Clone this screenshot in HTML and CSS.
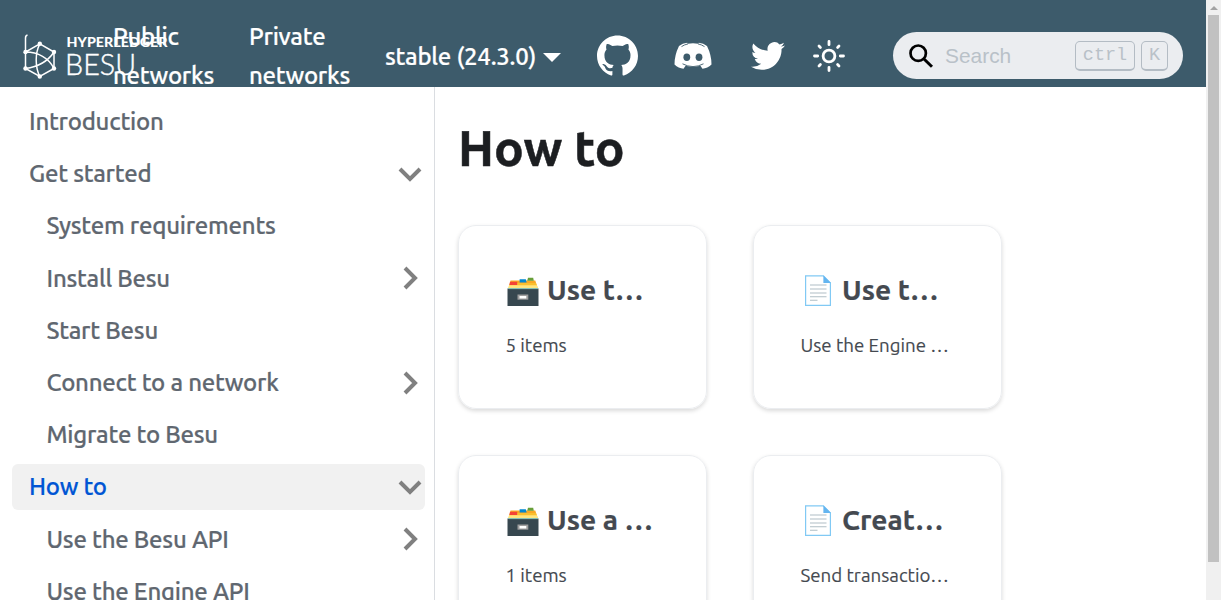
FILE: index.html
```html
<!DOCTYPE html>
<html lang="en">
<head>
<meta charset="utf-8">
<title>How to | Besu documentation</title>
<link rel="stylesheet" href="styles.css">
</head>
<body>
<svg class="defs" aria-hidden="true">
  <symbol id="box" viewBox="0 0 32 32">
    <path fill="#f9a825" d="M3.5 5.600h24.800l2.200 7H2z"/>
    <path fill="#689f38" d="M21 2.700h5.200l.6 3h-6.600z"/>
    <path fill="#0288d1" d="M12.600 4.200h6.200l.8 3.300h-7z"/>
    <path fill="#fbc02d" d="M3 8h26l1.500 5H1.800z"/>
    <path fill="#f44336" d="M3 6.800h7.200v3.300H2.400z"/>
    <path fill="#ffe57f" d="M2 10.200h28l1.200 3.300H.8z"/>
    <path fill="#37474f" d="M.5 13.500h31V31H.5z"/>
    <path fill="#80cbc4" d="M1 13.200h30v.9H1z"/>
    <path fill="#9e9e9e" d="M10.500 19.500h10.800v5.200H10.500z"/>
    <path fill="#fff" d="M12.500 21h6.800v2.500h-6.800z"/>
  </symbol>
  <symbol id="page" viewBox="0 0 32 32">
    <path fill="#fff" stroke="#81c9f4" stroke-width="1.200" d="M3.600.9h17.800L28.400 8v22.400H3.600z"/>
    <path fill="#64b5f0" d="M21.400.4 29 8h-7.600z"/>
    <path stroke="#b0bec5" stroke-width="1.100" d="M8 10h16.500M8 14h16.500M8 18h16.500M8 21.800h16.500M8 25.300h7.500"/>
  </symbol>
  <symbol id="chev" viewBox="0 0 24 24">
    <path fill="none" stroke="#808080" stroke-width="4" d="M7 2l10 10L7 22"/>
  </symbol>
</svg>
<div class="window">
  <div class="app">
    <header class="navbar">
      <a class="logo">
        <svg width="150" height="50" viewBox="0 0 150 50">
          <g fill="none" stroke="#fff" stroke-width="1.500">
            <path d="M4.500 4Q2.500 4.500 2.500 7v30.500L16.800 45.500 31 37.500V21L16.800 12.800 2.500 21C15 21 26 27 31 37.500M31 21C24 31.500 14 36 2.500 37.500M16.800 12.800C12 22 12 36 16.800 45.500"/>
          </g>
          <g fill="#fff"><circle cx="16.800" cy="12.800" r="2.200"/><circle cx="2.500" cy="21" r="2.200"/><circle cx="31" cy="21" r="2.200"/><circle cx="2.500" cy="37.500" r="2.200"/><circle cx="31" cy="37.500" r="2.200"/><circle cx="16.800" cy="45.500" r="2.200"/></g>
          <text class="brand-top" x="43.500" y="16" textLength="101" lengthAdjust="spacingAndGlyphs">HYPERLEDGER</text>
          <text class="brand-main" x="42" y="43.500" textLength="71" lengthAdjust="spacingAndGlyphs">BESU</text>
        </svg>
      </a>
      <a class="nav-link">Public<br>networks</a>
      <a class="nav-link">Private<br>networks</a>
      <a class="version"><span>stable (24.3.0)</span><i class="caret"></i></a>
      <svg class="github" viewBox="0 0 24 24" fill="#fff"><path d="M12 .297c-6.630 0-12 5.373-12 12 0 5.303 3.438 9.800 8.205 11.385.6.113.82-.258.82-.577 0-.285-.010-1.040-.015-2.040-3.338.724-4.042-1.610-4.042-1.610C4.422 18.070 3.633 17.700 3.633 17.700c-1.087-.744.084-.729.084-.729 1.205.084 1.838 1.236 1.838 1.236 1.070 1.835 2.809 1.305 3.495.998.108-.776.417-1.305.76-1.605-2.665-.3-5.466-1.332-5.466-5.930 0-1.310.465-2.380 1.235-3.220-.135-.303-.54-1.523.105-3.176 0 0 1.005-.322 3.300 1.230.96-.267 1.980-.399 3-.405 1.020.006 2.040.138 3 .405 2.280-1.552 3.285-1.230 3.285-1.230.645 1.653.24 2.873.12 3.176.765.84 1.230 1.910 1.230 3.220 0 4.610-2.805 5.625-5.475 5.920.42.36.81 1.096.81 2.220 0 1.606-.015 2.896-.015 3.286 0 .315.21.69.825.57C20.565 22.092 24 17.592 24 12.297c0-6.627-5.373-12-12-12"/></svg>
      <svg class="discord" viewBox="0 0 38 28"><path fill="#fff" d="M5 4Q8.500 1.300 13.200.7L13.800 1.700Q19 .9 24.200 1.700L24.800.7Q29.500 1.300 33 4Q37.500 13 37.500 22.500Q33.500 26.300 28.500 26.800L26.400 23.800Q19 26 11.600 23.800L9.500 26.800Q4.500 26.300.5 22.500Q.5 13 5 4Z"/><path fill="none" stroke="#3d5b6b" stroke-width=".9" d="M7.500 4.600Q10.500 2.600 14 1.900M30.500 4.600Q27.500 2.600 24 1.900M8.500 21.800Q19 27.400 29.500 21.800"/><ellipse cx="12.800" cy="15.300" rx="3.400" ry="3.700" fill="#3d5b6b"/><ellipse cx="25" cy="15.300" rx="3.400" ry="3.700" fill="#3d5b6b"/></svg>
      <svg class="twitter" viewBox="0 0 24 24" fill="#fff"><path d="M23.953 4.570a10 10 0 0 1-2.825.775 4.958 4.958 0 0 0 2.163-2.723c-.951.555-2.005.959-3.127 1.184a4.920 4.920 0 0 0-8.384 4.482C7.690 8.095 4.067 6.130 1.640 3.162a4.822 4.822 0 0 0-.666 2.475c0 1.710.87 3.213 2.188 4.096a4.904 4.904 0 0 1-2.228-.616v.06a4.923 4.923 0 0 0 3.946 4.827 4.996 4.996 0 0 1-2.212.085 4.936 4.936 0 0 0 4.604 3.417 9.867 9.867 0 0 1-6.102 2.105c-.39 0-.779-.023-1.170-.067a13.995 13.995 0 0 0 7.557 2.209c9.053 0 13.998-7.496 13.998-13.985 0-.21 0-.42-.015-.63A9.935 9.935 0 0 0 24 4.590z"/></svg>
      <svg class="sun" viewBox="0 0 32 32" fill="none" stroke="#fff" stroke-width="2.800" stroke-linecap="round"><circle cx="16" cy="16" r="5.900"/><path d="M16 1.500v3.200M16 27.300v3.200M1.500 16h3.200M27.300 16h3.200M6 6l1.400 1.400M24.600 24.600 26 26M6 26l1.400-1.400M24.600 7.400 26 6"/></svg>
      <div class="search">
        <svg class="lens" viewBox="0 0 24 24" fill="none" stroke="#000" stroke-width="2.700"><circle cx="9.200" cy="9.200" r="7.700"/><path stroke-width="3" d="M14.500 14.500 23 22.800"/></svg>
        <span class="placeholder">Search</span>
        <kbd class="ctrl">ctrl</kbd><kbd class="key">K</kbd>
      </div>
    </header>
    <div class="body">
      <aside class="sidebar">
        <a class="item"><span>Introduction</span></a>
        <a class="item"><span>Get started</span><svg class="chev down"><use href="#chev"/></svg></a>
        <a class="item sub"><span>System requirements</span></a>
        <a class="item sub"><span>Install Besu</span><svg class="chev"><use href="#chev"/></svg></a>
        <a class="item sub"><span>Start Besu</span></a>
        <a class="item sub"><span>Connect to a network</span><svg class="chev"><use href="#chev"/></svg></a>
        <a class="item sub"><span>Migrate to Besu</span></a>
        <a class="item active"><span>How to</span><svg class="chev down"><use href="#chev"/></svg></a>
        <a class="item sub"><span>Use the Besu API</span><svg class="chev"><use href="#chev"/></svg></a>
        <a class="item sub"><span>Use the Engine API</span></a>
      </aside>
      <main class="content">
        <h1>How to</h1>
        <div class="cards">
          <article class="card"><h2><svg class="emoji"><use href="#box"/></svg><span>Use t…</span></h2><p>5 items</p></article>
          <article class="card"><h2><svg class="emoji"><use href="#page"/></svg><span>Use t…</span></h2><p>Use the Engine …</p></article>
          <article class="card"><h2><svg class="emoji"><use href="#box"/></svg><span>Use a …</span></h2><p>1 items</p></article>
          <article class="card"><h2><svg class="emoji"><use href="#page"/></svg><span>Creat…</span></h2><p>Send transactio…</p></article>
        </div>
      </main>
    </div>
  </div>
  <div class="scrollbar"><i class="arrow"></i><i class="thumb"></i></div>
</div>
</body>
</html>
```
FILE: styles.css
```css
* { box-sizing: border-box; }
body { margin: 0; background: #fff; font-family: Ubuntu, "Noto Sans", sans-serif; overflow: hidden; }
.defs { display: none; }
.window { display: flex; width: 1221px; height: 600px; overflow: hidden; }
.app { width: 1206px; height: 600px; overflow: hidden; }
.navbar { display: flex; align-items: center; height: 87px; padding: 24px 23px 0; background: #3d5b6b; color: #fff; font-size: 24px; letter-spacing: -.24px; -webkit-text-stroke: .2px; font-weight: 500; line-height: 39px; overflow: hidden; white-space: nowrap; }
.navbar > * { flex: none; }
.logo { width: 90px; height: 50px; letter-spacing: 0; -webkit-text-stroke: 0; }
.logo svg { display: block; overflow: visible; }
.brand-top { font: 900 12.500px Lato, sans-serif; fill: #fff; }
.brand-main { font: 300 29px Lato, sans-serif; fill: #fff; stroke: #fff; stroke-width: .4px; }
.nav-link { width: 136px; padding-top: 1px; }
.version { display: flex; align-items: center; gap: 7px; width: 177px; }
.version span { padding-top: 2px; }
.caret { border: 9px solid transparent; border-top-color: #fff; border-bottom: 0; margin-top: 4px; }
.github { width: 41px; height: 41px; margin-left: 35px; }
.discord { width: 38px; height: 28px; margin-left: 36px; }
.twitter { width: 34px; height: 34px; margin-left: 39px; }
.sun { width: 32px; height: 32px; margin-left: 28px; }
.search { display: flex; align-items: center; width: 290px; height: 47px; margin-left: 48px; padding: 0 15px 0 16px; border-radius: 24px; background: #ebedf0; color: #b9c1c8; font: 20.900px "Liberation Sans", sans-serif; letter-spacing: 0; -webkit-text-stroke: 0; }
.lens { width: 24px; height: 24px; }
.placeholder { margin-left: 12px; }
kbd { height: 30px; border: 1px solid #b4bcc4; border-bottom-width: 2px; border-radius: 5px; font: 18.500px/28px "Liberation Mono", monospace; text-align: center; }
.ctrl { width: 60px; margin-left: auto; }
.key { width: 27px; margin-left: 6px; }
.body { display: flex; height: 513px; }
.sidebar { width: 435px; padding: 11.500px 9px 0 12px; border-right: 1px solid #dadde1; overflow: hidden; }
.item { display: flex; align-items: center; justify-content: space-between; height: 46.200px; margin-bottom: 6px; padding: 0 3px 0 17px; border-radius: 6px; color: #606770; font-size: 24px; letter-spacing: -.24px; -webkit-text-stroke: .2px; font-weight: 500; white-space: nowrap; }
.sub { padding-left: 34.500px; }
.active { background: #f1f1f1; color: #0055d4; }
.chev { width: 24px; height: 24px; }
.down { transform: rotate(90deg); }
.content { flex: 1; padding: 25px 0 0 23px; }
h1 { height: 72px; margin: 0 0 41px; color: #1c1e21; font-size: 49.700px; line-height: 72px; font-weight: 700; -webkit-text-stroke: .5px; }
.cards { display: grid; grid-template-columns: 249px 249px; gap: 46px; }
.card { height: 184px; padding: 48px 47px; border: 1px solid #ebedf0; border-radius: 18px; box-shadow: 0 2px 4px rgba(0,0,0,.15); color: #444950; white-space: nowrap; }
.emoji { width: 32px; height: 32px; margin: 0 8px 0 1px; }
h2 { display: flex; align-items: center; height: 34px; margin: 0 0 23px; font-size: 28.100px; line-height: 34px; -webkit-text-stroke: .2px; }
h2 span { padding-bottom: 2px; }
.card p { margin: 0 0 0 -.5px; font-size: 18.700px; line-height: 30px; -webkit-text-stroke: .15px; }
.scrollbar { display: flex; flex-direction: column; align-items: center; width: 15px; height: 600px; background: #f0f0f0; }
.arrow { margin: 6px 0 5px; border: 4px solid transparent; border-bottom-color: #a3a3a3; border-top: 0; }
.thumb { width: 11px; height: 547px; background: #c1c1c1; }
```
